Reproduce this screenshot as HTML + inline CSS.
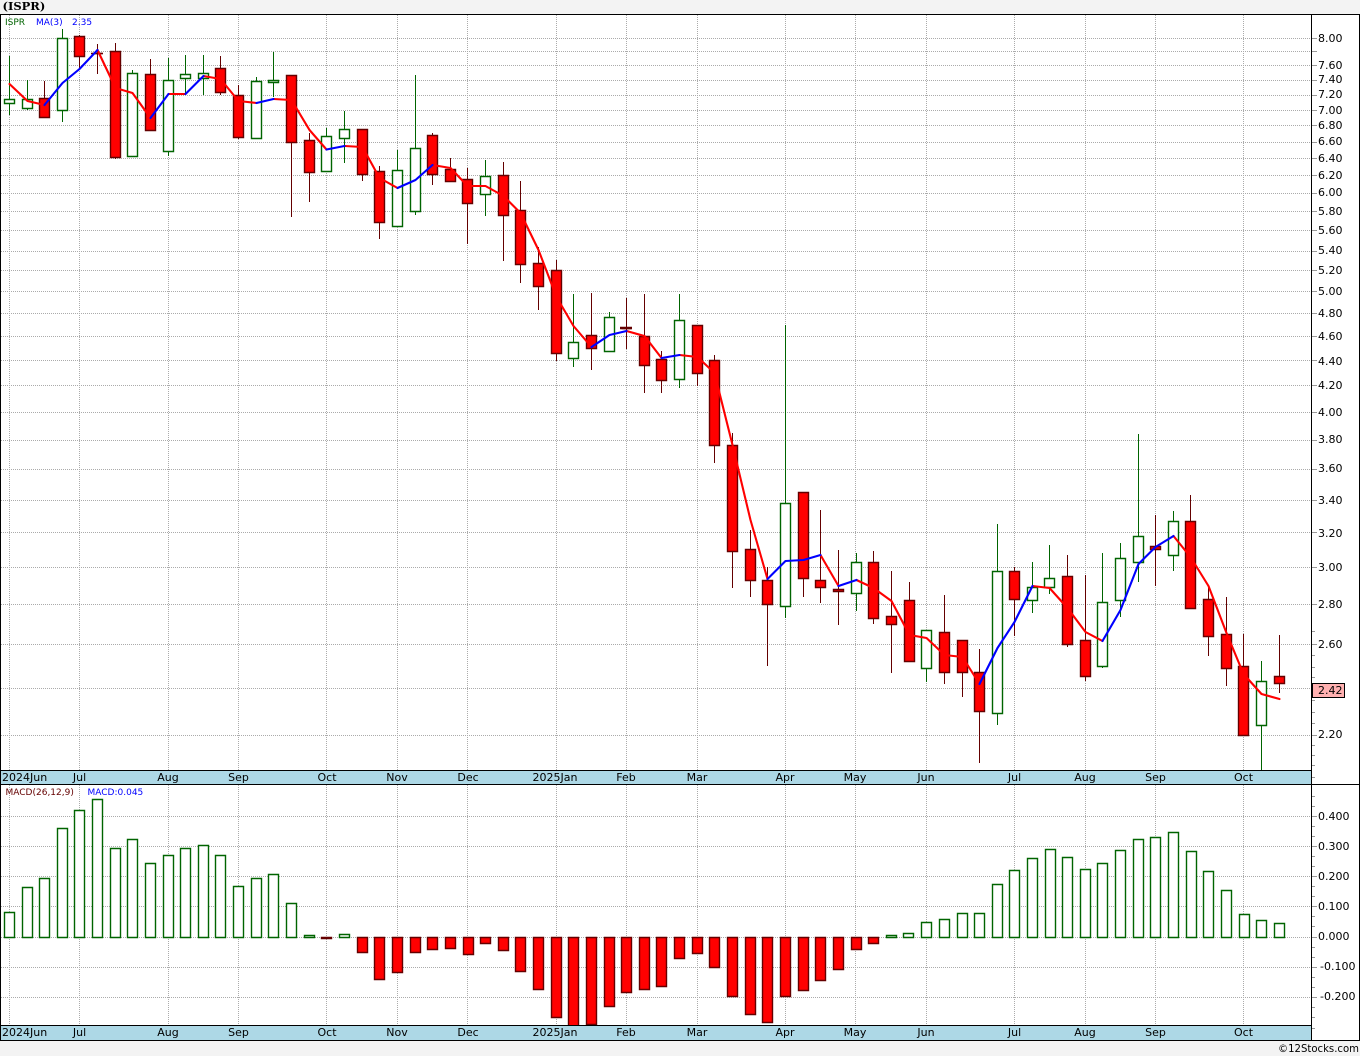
<!DOCTYPE html>
<html lang="en">
<head>
<meta charset="utf-8">
<title>ISPR</title>
<style>
html,body{margin:0;padding:0;background:#f3f3f3;width:1360px;height:1056px;overflow:hidden}
svg{display:block}
text{font-family:"DejaVu Sans",sans-serif;font-size:11px;fill:#000}
.s text{font-size:9px}
.m{text-anchor:middle}
</style>
</head>
<body>
<svg width="1360" height="1056" viewBox="0 0 1360 1056" xmlns="http://www.w3.org/2000/svg">
<rect width="1360" height="1056" fill="#f3f3f3"/>
<rect x="0" y="14" width="1360" height="1027" fill="#fff"/>
<rect x="1" y="771" width="1310" height="13" fill="#add8e6"/>
<rect x="1" y="1026" width="1310" height="14" fill="#add8e6"/>

<!-- grid -->
<g shape-rendering="crispEdges" stroke="#ababab" stroke-width="1" stroke-dasharray="1 1" fill="none">
<path d="M1 38.5H1312M1 51.5H1312M1 65.5H1312M1 80.5H1312M1 95.5H1312M1 110.5H1312M1 125.5H1312M1 142.5H1312M1 158.5H1312M1 175.5H1312M1 193.5H1312M1 211.5H1312M1 230.5H1312M1 251.5H1312M1 270.5H1312M1 291.5H1312M1 313.5H1312M1 336.5H1312M1 360.5H1312M1 385.5H1312M1 412.5H1312M1 440.5H1312M1 469.5H1312M1 500.5H1312M1 532.5H1312M1 567.5H1312M1 604.5H1312M1 644.5H1312M1 688.5H1312M1 735.5H1312"/>
<path d="M9.5 15V770M79.5 15V770M168.5 15V770M238.5 15V770M326.5 15V770M397.5 15V770M467.5 15V770M556.5 15V770M626.5 15V770M697.5 15V770M785.5 15V770M855.5 15V770M926.5 15V770M1014.5 15V770M1085.5 15V770M1155.5 15V770M1243.5 15V770"/>
<path d="M1 816.5H1312M1 846.5H1312M1 876.5H1312M1 906.5H1312M1 937.5H1312M1 967.5H1312M1 997.5H1312"/>
<path d="M9.5 785V1025M79.5 785V1025M168.5 785V1025M238.5 785V1025M326.5 785V1025M397.5 785V1025M467.5 785V1025M556.5 785V1025M626.5 785V1025M697.5 785V1025M785.5 785V1025M855.5 785V1025M926.5 785V1025M1014.5 785V1025M1085.5 785V1025M1155.5 785V1025M1243.5 785V1025"/>
</g>

<!-- wicks -->
<g shape-rendering="crispEdges" fill="none" stroke-width="1">
<path stroke="#006400" d="M9.5 56V115M27.5 80V110M62.5 29V122M132.5 70V156M168.5 58V156M185.5 55V94M203.5 55V95M256.5 77V138M273.5 52V97M326.5 128V172M344.5 111V163M397.5 150V226M415.5 75V215M485.5 160V216M573.5 294V367M609.5 312V351M679.5 294V388M785.5 325V618M856.5 553V611M926.5 630V682M997.5 524V725M1032.5 562V613M1049.5 545V594M1102.5 553V668M1120.5 543V617M1138.5 434V582M1173.5 511V571M1261.5 661V770"/>
<path stroke="#640000" d="M44.5 81V118M79.5 35V70M97.5 44V74M115.5 43V159M150.5 59V130M220.5 56V95M238.5 85V139M291.5 75V217M309.5 133V202M362.5 129V181M379.5 166V239M432.5 133V185M450.5 158V181M467.5 168V244M503.5 162V261M520.5 181V283M538.5 247V310M556.5 260V361M591.5 293V370M626.5 298V349M644.5 294V393M661.5 351V393M697.5 325V386M714.5 355V463M732.5 433V588M750.5 530V597M767.5 567V666M803.5 492V597M820.5 510V603M838.5 550V625M873.5 551V624M891.5 571V673M909.5 582V661M944.5 595V684M962.5 640V697M979.5 649V763M1014.5 567V636M1067.5 555V647M1085.5 575V681M1155.5 515V586M1190.5 495V609M1208.5 587V656M1226.5 597V686M1243.5 634V735M1279.5 635V693"/>
</g>

<!-- candle bodies -->
<g stroke-width="1.4">
<path fill="#fff" stroke="#006400" d="M4.5 99.5h10v4h-10zM22.5 99.5h10v9h-10zM57.5 38.5h10v72h-10zM127.5 73.5h10v83h-10zM163.5 80.5h10v71h-10zM180.5 74.5h10v4h-10zM198.5 73.5h10v5h-10zM251.5 81.5h10v57h-10zM268.5 80.5h10v2h-10zM321.5 136.5h10v35h-10zM339.5 129.5h10v9h-10zM392.5 170.5h10v56h-10zM410.5 148.5h10v63h-10zM480.5 176.5h10v18h-10zM568.5 342.5h10v16h-10zM604.5 317.5h10v34h-10zM674.5 320.5h10v59h-10zM780.5 503.5h10v103h-10zM851.5 562.5h10v31h-10zM921.5 630.5h10v38h-10zM992.5 571.5h10v142h-10zM1027.5 587.5h10v13h-10zM1044.5 578.5h10v9h-10zM1097.5 602.5h10v64h-10zM1115.5 558.5h10v42h-10zM1133.5 536.5h10v26h-10zM1168.5 521.5h10v34h-10zM1256.5 681.5h10v44h-10z"/>
<path fill="#f00" stroke="#640000" d="M39.5 98.5h10v19h-10zM74.5 36.5h10v20h-10zM92.5 53.5h10v0h-10zM110.5 51.5h10v106h-10zM145.5 74.5h10v56h-10zM215.5 68.5h10v24h-10zM233.5 95.5h10v42h-10zM286.5 75.5h10v67h-10zM304.5 140.5h10v32h-10zM357.5 129.5h10v45h-10zM374.5 171.5h10v51h-10zM427.5 135.5h10v39h-10zM445.5 169.5h10v12h-10zM462.5 179.5h10v24h-10zM498.5 175.5h10v40h-10zM515.5 210.5h10v54h-10zM533.5 263.5h10v23h-10zM551.5 270.5h10v83h-10zM586.5 335.5h10v13h-10zM621.5 328.5h10v0h-10zM639.5 336.5h10v29h-10zM656.5 359.5h10v21h-10zM692.5 325.5h10v48h-10zM709.5 360.5h10v85h-10zM727.5 445.5h10v106h-10zM745.5 549.5h10v31h-10zM762.5 580.5h10v24h-10zM798.5 492.5h10v86h-10zM815.5 580.5h10v7h-10zM833.5 589.5h10v2h-10zM868.5 562.5h10v56h-10zM886.5 616.5h10v8h-10zM904.5 600.5h10v61h-10zM939.5 632.5h10v40h-10zM957.5 640.5h10v32h-10zM974.5 672.5h10v39h-10zM1009.5 571.5h10v28h-10zM1062.5 576.5h10v68h-10zM1080.5 640.5h10v36h-10zM1150.5 546.5h10v3h-10zM1185.5 521.5h10v87h-10zM1203.5 599.5h10v37h-10zM1221.5 634.5h10v34h-10zM1238.5 666.5h10v69h-10zM1274.5 676.5h10v7h-10z"/>
<path fill="none" stroke="#640000" d="M91 53.5h12M620 327.5h12M620 328.5h12"/>
</g>

<!-- MA(3) -->
<g fill="none" stroke-width="2.1" stroke-linejoin="round" stroke-linecap="round">
<path stroke="#f00" d="M9.5 84L27.5 101L44.5 105M97.5 50L115.5 88L132.5 93L150.5 118M168.5 94L185.5 94M203.5 76L220.5 79L238.5 101L256.5 103M273.5 99L291.5 100L309.5 130L326.5 149.5M344.5 146L362.5 147L379.5 178L397.5 188M432.5 165L450.5 168L467.5 186L485.5 186L503.5 196L520.5 213L538.5 250L556.5 297L573.5 326L591.5 347M626.5 331L644.5 336L661.5 358M679.5 355L697.5 357L714.5 373L732.5 445L750.5 520L767.5 579M820.5 555L838.5 586M856.5 580L873.5 588L891.5 601L909.5 635L926.5 638L944.5 655L962.5 657L979.5 684M1032.5 586L1049.5 588L1067.5 608L1085.5 632L1102.5 641M1173.5 536L1190.5 557L1208.5 586L1226.5 633L1243.5 674L1261.5 694L1279.5 699"/>
<path stroke="#00f" d="M44.5 105L62.5 83L79.5 69L97.5 50M150.5 118L168.5 94M185.5 94L203.5 76M256.5 103L273.5 99M326.5 149.5L344.5 146M397.5 188L415.5 180L432.5 165M591.5 347L609.5 335L626.5 331M661.5 358L679.5 355M767.5 579L785.5 561L803.5 560L820.5 555M838.5 586L856.5 580M979.5 684L997.5 648L1014.5 622L1032.5 586M1102.5 641L1120.5 610L1138.5 564L1155.5 547L1173.5 536"/>
</g>

<!-- MACD bars -->
<g stroke-width="1.4">
<path fill="#fff" stroke="#006400" d="M4.5 912.5h10V937.5h-10zM22.5 887.5h10V937.5h-10zM39.5 878.5h10V937.5h-10zM57.5 828.5h10V937.5h-10zM74.5 810.5h10V937.5h-10zM92.5 799.5h10V937.5h-10zM110.5 848.5h10V937.5h-10zM127.5 839.5h10V937.5h-10zM145.5 863.5h10V937.5h-10zM163.5 855.5h10V937.5h-10zM180.5 848.5h10V937.5h-10zM198.5 845.5h10V937.5h-10zM215.5 855.5h10V937.5h-10zM233.5 886.5h10V937.5h-10zM251.5 878.5h10V937.5h-10zM268.5 874.5h10V937.5h-10zM286.5 903.5h10V937.5h-10zM304.5 935.5h10V937.5h-10zM339.5 934.5h10V937.5h-10zM886.5 935.5h10V937.5h-10zM903.5 933.5h10V937.5h-10zM921.5 922.5h10V937.5h-10zM939.5 919.5h10V937.5h-10zM957.5 913.5h10V937.5h-10zM974.5 913.5h10V937.5h-10zM992.5 884.5h10V937.5h-10zM1009.5 870.5h10V937.5h-10zM1027.5 858.5h10V937.5h-10zM1045.5 849.5h10V937.5h-10zM1062.5 857.5h10V937.5h-10zM1080.5 869.5h10V937.5h-10zM1097.5 863.5h10V937.5h-10zM1115.5 850.5h10V937.5h-10zM1133.5 839.5h10V937.5h-10zM1150.5 837.5h10V937.5h-10zM1168.5 832.5h10V937.5h-10zM1186.5 851.5h10V937.5h-10zM1203.5 871.5h10V937.5h-10zM1221.5 890.5h10V937.5h-10zM1239.5 914.5h10V937.5h-10zM1256.5 920.5h10V937.5h-10zM1274.5 923.5h10V937.5h-10z"/>
<path fill="#f00" stroke="#640000" d="M321.5 937.5h10V938.5h-10zM357.5 937.5h10V952.5h-10zM374.5 937.5h10V979.5h-10zM392.5 937.5h10V972.5h-10zM410.5 937.5h10V952.5h-10zM427.5 937.5h10V949.5h-10zM445.5 937.5h10V948.5h-10zM463.5 937.5h10V954.5h-10zM480.5 937.5h10V943.5h-10zM498.5 937.5h10V950.5h-10zM515.5 937.5h10V971.5h-10zM533.5 937.5h10V989.5h-10zM551.5 937.5h10V1017.5h-10zM568.5 937.5h10V1026h-10zM586.5 937.5h10V1024.5h-10zM604.5 937.5h10V1006.5h-10zM621.5 937.5h10V992.5h-10zM639.5 937.5h10V989.5h-10zM656.5 937.5h10V986.5h-10zM674.5 937.5h10V958.5h-10zM692.5 937.5h10V953.5h-10zM709.5 937.5h10V967.5h-10zM727.5 937.5h10V996.5h-10zM745.5 937.5h10V1014.5h-10zM762.5 937.5h10V1022.5h-10zM780.5 937.5h10V996.5h-10zM798.5 937.5h10V990.5h-10zM815.5 937.5h10V980.5h-10zM833.5 937.5h10V969.5h-10zM851.5 937.5h10V949.5h-10zM868.5 937.5h10V943.5h-10z"/>
</g>

<!-- frame lines and axis ticks -->
<rect x="1" y="1026" width="1310" height="14" fill="#add8e6"/>
<g shape-rendering="crispEdges" stroke="#000" stroke-width="1" fill="none">
<path d="M0 14.5H1360M0 784.5H1360M0 1040.5H1360M1 770.5H1311M1 1025.5H1311"/>
<path d="M.5 14V1041M1311.5 14V1041M1359.5 14V1041"/>
</g>
<g shape-rendering="crispEdges" stroke="#999" stroke-width="1" fill="none">
<path d="M1312 38.5h5M1312 51.5h5M1312 65.5h5M1312 80.5h5M1312 95.5h5M1312 110.5h5M1312 125.5h5M1312 142.5h5M1312 158.5h5M1312 175.5h5M1312 193.5h5M1312 211.5h5M1312 230.5h5M1312 251.5h5M1312 270.5h5M1312 291.5h5M1312 313.5h5M1312 336.5h5M1312 360.5h5M1312 385.5h5M1312 412.5h5M1312 440.5h5M1312 469.5h5M1312 500.5h5M1312 532.5h5M1312 567.5h5M1312 604.5h5M1312 644.5h5M1312 688.5h5M1312 735.5h5"/>
<path d="M1312 631.5h3M1312 655.5h3M1312 667.5h3M1312 677.5h3M1312 700.5h3M1312 712.5h3M1312 723.5h3M1312 745.5h3M1312 755.5h3M1312 765.5h3M1312 777.5h3"/>
<path d="M1312 816.5h5M1312 846.5h5M1312 876.5h5M1312 906.5h5M1312 937.5h5M1312 967.5h5M1312 997.5h5"/>
<path d="M1312 796.5h3M1312 806.5h3M1312 826.5h3M1312 836.5h3M1312 856.5h3M1312 866.5h3M1312 886.5h3M1312 896.5h3M1312 916.5h3M1312 926.5h3M1312 947.5h3M1312 957.5h3M1312 977.5h3M1312 987.5h3M1312 1007.5h3M1312 1017.5h3M1312 1028.5h3"/>
</g>

<!-- price tag -->
<rect x="1312.5" y="683.5" width="32" height="14" fill="#ffb0b0" stroke="#000" stroke-width="1" shape-rendering="crispEdges"/>
<text x="1318" y="694">2.42</text>

<!-- title & legends -->
<text x="2.5" y="10" style="font-family:'DejaVu Serif',serif;font-weight:bold;font-size:11.5px">(ISPR)</text>
<g class="s">
<text x="5" y="25" style="fill:#006400">ISPR</text>
<text x="36" y="25" style="fill:#00f">MA(3)</text>
<text x="72" y="25" style="fill:#00f">2.35</text>
<text x="5.5" y="795" style="fill:#640000">MACD(26,12,9)</text>
<text x="87.5" y="795" style="fill:#00f">MACD:0.045</text>
</g>

<!-- price labels -->
<text x="1318" y="42">8.00</text>
<text x="1318" y="69">7.60</text>
<text x="1318" y="83">7.40</text>
<text x="1318" y="98">7.20</text>
<text x="1318" y="114">7.00</text>
<text x="1318" y="129">6.80</text>
<text x="1318" y="145">6.60</text>
<text x="1318" y="162">6.40</text>
<text x="1318" y="179">6.20</text>
<text x="1318" y="196">6.00</text>
<text x="1318" y="215">5.80</text>
<text x="1318" y="234">5.60</text>
<text x="1318" y="254">5.40</text>
<text x="1318" y="274">5.20</text>
<text x="1318" y="295">5.00</text>
<text x="1318" y="317">4.80</text>
<text x="1318" y="340">4.60</text>
<text x="1318" y="365">4.40</text>
<text x="1318" y="389">4.20</text>
<text x="1318" y="416">4.00</text>
<text x="1318" y="443">3.80</text>
<text x="1318" y="472">3.60</text>
<text x="1318" y="504">3.40</text>
<text x="1318" y="537">3.20</text>
<text x="1318" y="571">3.00</text>
<text x="1318" y="608">2.80</text>
<text x="1318" y="648">2.60</text>
<text x="1318" y="738">2.20</text>

<!-- MACD labels -->
<text x="1318" y="820">0.400</text>
<text x="1318" y="850">0.300</text>
<text x="1318" y="880">0.200</text>
<text x="1318" y="910">0.100</text>
<text x="1318" y="940">0.000</text>
<text x="1320" y="970">-0.100</text>
<text x="1320" y="1000">-0.200</text>

<!-- date labels upper -->
<text x="2" y="781">2024Jun</text>
<text class="m" x="79.5" y="781">Jul</text>
<text class="m" x="168" y="781">Aug</text>
<text class="m" x="238.5" y="781">Sep</text>
<text class="m" x="327" y="781">Oct</text>
<text class="m" x="397" y="781">Nov</text>
<text class="m" x="468" y="781">Dec</text>
<text class="m" x="555" y="781">2025Jan</text>
<text class="m" x="626" y="781">Feb</text>
<text class="m" x="697" y="781">Mar</text>
<text class="m" x="785" y="781">Apr</text>
<text class="m" x="855" y="781">May</text>
<text class="m" x="926" y="781">Jun</text>
<text class="m" x="1014.5" y="781">Jul</text>
<text class="m" x="1085" y="781">Aug</text>
<text class="m" x="1155.5" y="781">Sep</text>
<text class="m" x="1243.5" y="781">Oct</text>

<!-- date labels lower -->
<text x="2" y="1036">2024Jun</text>
<text class="m" x="79.5" y="1036">Jul</text>
<text class="m" x="168" y="1036">Aug</text>
<text class="m" x="238.5" y="1036">Sep</text>
<text class="m" x="327" y="1036">Oct</text>
<text class="m" x="397" y="1036">Nov</text>
<text class="m" x="468" y="1036">Dec</text>
<text class="m" x="555" y="1036">2025Jan</text>
<text class="m" x="626" y="1036">Feb</text>
<text class="m" x="697" y="1036">Mar</text>
<text class="m" x="785" y="1036">Apr</text>
<text class="m" x="855" y="1036">May</text>
<text class="m" x="926" y="1036">Jun</text>
<text class="m" x="1014.5" y="1036">Jul</text>
<text class="m" x="1085" y="1036">Aug</text>
<text class="m" x="1155.5" y="1036">Sep</text>
<text class="m" x="1243.5" y="1036">Oct</text>

<text x="1278" y="1052" textLength="81" lengthAdjust="spacingAndGlyphs">©12Stocks.com</text>
</svg>
</body>
</html>
